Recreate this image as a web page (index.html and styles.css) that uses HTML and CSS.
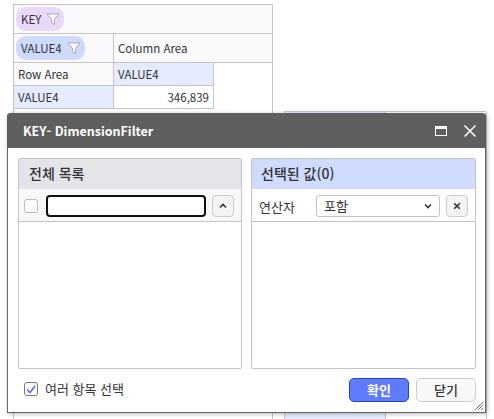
FILE: index.html
```html
<!DOCTYPE html>
<html lang="ko">
<head>
  <meta charset="utf-8">
  <title>KEY- DimensionFilter</title>
  <link rel="stylesheet" href="styles.css">
</head>
<body>
  <div class="stage">
    <div class="pivot">
      <div class="pivot-row pivot-key">
        <span class="chip chip-key">KEY
          <svg class="funnel" width="14" height="14" viewBox="0 0 14 14"><path d="M1 2h12L8.500 7.500v5l-3-1.500V7.500z" fill="#fff" stroke="#a9a9b4"/></svg>
        </span>
      </div>
      <div class="pivot-row pivot-head">
        <div class="head-left">
          <span class="chip chip-value">VALUE4
            <svg class="funnel" width="14" height="14" viewBox="0 0 14 14"><path d="M1 2h12L8.500 7.500v5l-3-1.500V7.500z" fill="#fff" stroke="#a9a9b4"/></svg>
          </span>
        </div>
        <div class="head-right">Column Area</div>
      </div>
      <div class="pivot-grid">
        <div class="cell cell-label">Row Area</div>
        <div class="cell cell-blue">VALUE4</div>
        <div class="cell cell-blue">VALUE4</div>
        <div class="cell cell-num">346,839</div>
      </div>
    </div>

    <div class="back-grid">
      <div class="back-cell back-blue"></div>
      <div class="back-cell"></div>
    </div>

    <div class="dialog">
      <div class="dialog-title">
        <span class="dialog-name">KEY- DimensionFilter</span>
        <svg class="title-icon" width="14" height="14" viewBox="0 0 14 14"><rect x="1.500" y="2.500" width="11" height="9" fill="none" stroke="#fff"/><rect x="1" y="2" width="12" height="3" fill="#fff"/></svg>
        <svg class="title-icon" width="14" height="14" viewBox="0 0 14 14"><path d="M1.500 1.500l11 11M12.500 1.500l-11 11" stroke="#fff" stroke-width="1.500" fill="none"/></svg>
      </div>
      <div class="dialog-body">
        <div class="panels">
          <div class="panel">
            <div class="panel-head">전체 목록</div>
            <div class="panel-tools">
              <span class="check"></span>
              <input class="search" type="text">
              <button class="mini-btn">
                <svg width="8" height="6" viewBox="0 0 8 6"><path d="M1 4.500l3-3 3 3" fill="none" stroke="#333" stroke-width="1.600"/></svg>
              </button>
            </div>
          </div>
          <div class="panel">
            <div class="panel-head panel-head-blue">선택된 값(0)</div>
            <div class="panel-tools panel-tools-white">
              <span class="op-label">연산자</span>
              <div class="select">포함
                <svg width="8" height="6" viewBox="0 0 8 6"><path d="M1 1.500l3 3 3-3" fill="none" stroke="#333" stroke-width="1.600"/></svg>
              </div>
              <button class="mini-btn">
                <svg width="8" height="8" viewBox="0 0 8 8"><path d="M1.200 1.200l5.600 5.600M6.800 1.200l-5.600 5.600" fill="none" stroke="#333" stroke-width="1.600"/></svg>
              </button>
            </div>
          </div>
        </div>
        <div class="dialog-foot">
          <label class="multi">
            <span class="check check-on">
              <svg width="12" height="12" viewBox="0 0 12 12"><path d="M2 6.500l3 3 5-6.500" fill="none" stroke="#4a6cf7" stroke-width="1.600"/></svg>
            </span>
            여러 항목 선택
          </label>
          <div class="foot-btns">
            <button class="btn btn-ok">확인</button>
            <button class="btn">닫기</button>
          </div>
        </div>
        <svg class="grip" width="10" height="10" viewBox="0 0 10 10"><path d="M9 1L1 9M9 4L4 9M9 7L7 9" stroke="#777" fill="none"/></svg>
      </div>
    </div>
  </div>
</body>
</html>
```

FILE: styles.css
```css
html, body {
    margin: 0;
    background: #fff;
    font-family: "Noto Sans CJK KR", "Noto Sans", sans-serif;
    font-size: 11.5px;
    color: #333;
    overflow: hidden;
}
.stage {
    position: relative;
    width: 494px;
    height: 419px;
    overflow: hidden;
}

/* pivot behind the dialog */
.pivot {
    position: absolute;
    left: 13px;
    top: 4px;
    width: 260px;
    height: 415px;
    box-sizing: border-box;
    border-top: 1px solid #c4c4c4;
    border-left: 1px solid #c4c4c4;
    border-right: 1px solid #c4c4c4;
}
.pivot-row {
    display: flex;
    height: 29px;
    box-sizing: border-box;
    border-bottom: 1px solid #c4c4c4;
    background: #fafafc;
}
.pivot-key {
    align-items: center;
    padding-left: 2px;
}
.head-left {
    width: 100px;
    box-sizing: border-box;
    padding-left: 2px;
    display: flex;
    align-items: center;
    border-right: 1px solid #c4c4c4;
}
.head-right {
    padding-left: 4px;
    line-height: 28px;
}
.chip {
    display: inline-flex;
    align-items: center;
    gap: 5px;
    height: 24px;
    padding: 0 4px 0 5px;
    border-radius: 10px;
    line-height: 24px;
}
.chip-key {
    background: #ead9fb;
}
.chip-value {
    background: #cfdaff;
}
.pivot-grid {
    display: grid;
    grid-template-columns: 100px 100px;
    grid-auto-rows: 23px;
}
.cell {
    box-sizing: border-box;
    padding: 0 4px;
    line-height: 22px;
    border-bottom: 1px solid #c4c4c4;
    border-right: 1px solid #c4c4c4;
}
.cell-label {
    background: #fafafc;
}
.cell-blue {
    background: #e6ecff;
}
.cell-num {
    text-align: right;
}

.back-grid {
    position: absolute;
    left: 284px;
    top: 111px;
    width: 202px;
    height: 308px;
    display: grid;
    grid-template-columns: 101px 101px;
    box-sizing: border-box;
    border-top: 1px solid #c4c4c4;
    border-left: 1px solid #c4c4c4;
}
.back-cell {
    border-right: 1px solid #c4c4c4;
}
.back-blue {
    background: #e6ecff;
}

/* dialog */
.dialog {
    position: absolute;
    left: 7px;
    top: 113px;
    width: 479px;
    height: 300px;
    box-sizing: border-box;
    display: flex;
    flex-direction: column;
    background: #fff;
    border-radius: 4px 4px 0 0;
    border: 1px solid #666;
    border-top: 0;
    box-shadow: 1px 1px 4px rgba(0, 0, 0, .3);
}
.dialog-title {
    display: flex;
    align-items: center;
    gap: 15px;
    height: 35px;
    padding: 0 9px 0 16px;
    margin: 0 -1px;
    background: #5f5f60;
    border-radius: 4px 4px 0 0;
    color: #fff;
    font-weight: 700;
    font-size: 12.5px;
    flex: none;
}
.dialog-name {
    flex: 1;
}
.dialog-body {
    position: relative;
    flex: 1;
    display: flex;
    flex-direction: column;
    padding: 10px 9px 0 10px;
}
.panels {
    display: grid;
    grid-template-columns: 224px 225px;
    gap: 9px;
    height: 211px;
}
.panel {
    box-sizing: border-box;
    border: 1px solid #c4c4c4;
    border-radius: 2px;
}
.panel-head {
    height: 30px;
    padding-left: 10px;
    line-height: 29px;
    font-size: 14px;
    font-weight: 500;
    background: #e4e4e9;
}
.panel-head-blue {
    padding-left: 9px;
    background: #cfdcff;
}
.panel-tools {
    display: flex;
    align-items: center;
    height: 33px;
    box-sizing: border-box;
    padding: 2px 7px 0 5px;
    border-bottom: 1px solid #c4c4c4;
    background: #f8f8fb;
}
.panel-tools-white {
    background: #fff;
}
.check {
    display: inline-flex;
    align-items: center;
    justify-content: center;
    width: 14px;
    height: 14px;
    box-sizing: border-box;
    border: 1px solid #bbb;
    border-radius: 3px;
    background: #fff;
    flex: none;
}
.check-on {
    border-color: #777;
}
.search {
    flex: 1;
    min-width: 0;
    height: 22px;
    box-sizing: border-box;
    margin: 0 6px 0 8px;
    padding: 0;
    border: 2px solid #111;
    border-radius: 4px;
    outline: 0;
}
.mini-btn {
    width: 22px;
    height: 22px;
    padding: 0;
    display: flex;
    align-items: center;
    justify-content: center;
    border: 1px solid #ccc;
    border-radius: 4px;
    background: #f4f4f6;
    flex: none;
}
.op-label {
    width: 59px;
    padding-left: 2px;
    box-sizing: border-box;
    font-size: 13px;
}
.select {
    flex: 1;
    height: 22px;
    box-sizing: border-box;
    margin-right: 6px;
    padding: 0 7px;
    display: flex;
    align-items: center;
    justify-content: space-between;
    border: 1px solid #c4c4c4;
    border-radius: 3px;
    background: #fff;
    font-size: 13px;
    line-height: 20px;
}
.dialog-foot {
    display: flex;
    align-items: center;
    justify-content: space-between;
    flex: 1;
    padding: 0 0 2px 6px;
}
.multi {
    display: flex;
    align-items: center;
    gap: 7px;
    padding-bottom: 2px;
    font-size: 13px;
}
.foot-btns {
    display: flex;
    gap: 7px;
}
.btn {
    width: 60px;
    height: 24px;
    padding: 0;
    border: 1px solid #ccc;
    border-radius: 5px;
    background: #f8f8fb;
    color: #333;
    font-family: inherit;
    font-size: 13px;
    font-weight: 500;
}
.btn-ok {
    background: #5f7bff;
    border-color: #2244bb;
    color: #fff;
    font-weight: 700;
}
.grip {
    position: absolute;
    right: 1px;
    bottom: 1px;
}
```
